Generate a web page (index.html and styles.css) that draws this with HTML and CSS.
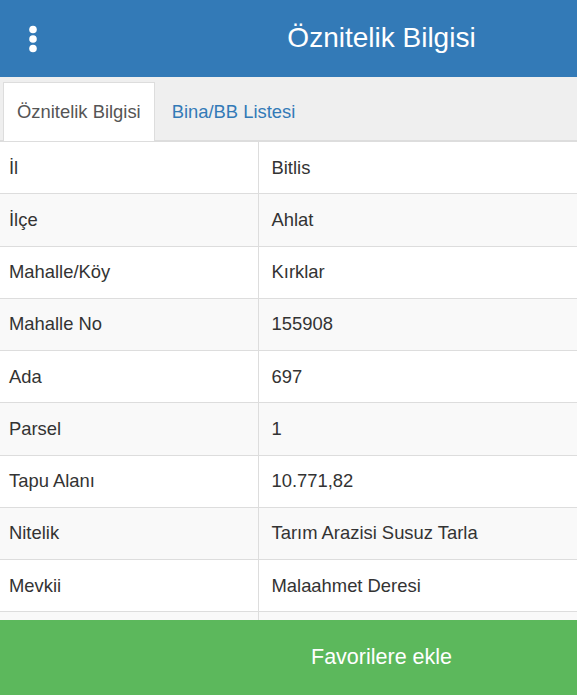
FILE: index.html
```html
<!DOCTYPE html>
<html lang="tr">
<head>
<meta charset="utf-8">
<title>Öznitelik Bilgisi</title>
<link rel="stylesheet" href="styles.css">
</head>
<body>
<div class="app">
  <header class="topbar">
    <button class="menu-btn" aria-label="Menü">
      <svg width="14" height="30" viewBox="0 0 14 30">
        <circle cx="7" cy="5.5" r="3.8" fill="#fff"/>
        <circle cx="7" cy="15" r="3.8" fill="#fff"/>
        <circle cx="7" cy="24.5" r="3.8" fill="#fff"/>
      </svg>
    </button>
    <h1 class="title">Öznitelik Bilgisi</h1>
  </header>
  <nav class="tabs">
    <a class="tab active">Öznitelik Bilgisi</a>
    <a class="tab">Bina/BB Listesi</a>
  </nav>
  <div class="content">
    <table class="attr-table">
      <tr><td class="key">İl</td><td class="val">Bitlis</td></tr>
      <tr><td class="key">İlçe</td><td class="val">Ahlat</td></tr>
      <tr><td class="key">Mahalle/Köy</td><td class="val">Kırklar</td></tr>
      <tr><td class="key">Mahalle No</td><td class="val">155908</td></tr>
      <tr><td class="key">Ada</td><td class="val">697</td></tr>
      <tr><td class="key">Parsel</td><td class="val">1</td></tr>
      <tr><td class="key">Tapu Alanı</td><td class="val">10.771,82</td></tr>
      <tr><td class="key">Nitelik</td><td class="val">Tarım Arazisi Susuz Tarla</td></tr>
      <tr><td class="key">Mevkii</td><td class="val">Malaahmet Deresi</td></tr>
      <tr><td class="key"></td><td class="val"></td></tr>
    </table>
  </div>
  <button class="fav-btn">Favorilere ekle</button>
</div>
</body>
</html>
```
FILE: styles.css
```css
* { box-sizing: border-box; }
html, body { margin: 0; padding: 0; }
body {
  font-family: "Liberation Sans", Arial, sans-serif;
  color: #333;
  background: #fff;
  width: 577px;
  height: 695px;
  overflow: hidden;
}
.app {
  display: flex;
  flex-direction: column;
  height: 695px;
}
.topbar {
  height: 77px;
  background: #337ab7;
  display: flex;
  align-items: center;
  flex-shrink: 0;
}
.menu-btn {
  background: none;
  border: 0;
  padding: 0;
  margin-left: 26px;
  margin-top: 1px;
  width: 14px;
  height: 30px;
  display: flex;
}
.title {
  margin: 0;
  flex: 1;
  padding-left: 146px;
  text-align: center;
  color: #fff;
  font-weight: normal;
  font-size: 28px;
  line-height: 32px;
  margin-top: -1px;
}
.tabs {
  background: #efefef;
  height: 64px;
  flex-shrink: 0;
  display: flex;
  align-items: flex-end;
  padding-left: 3px;
  border-bottom: 1px solid #ddd;
}
.tab {
  height: 59px;
  display: flex;
  align-items: center;
  padding: 0 13px;
  margin-right: 3px;
  font-size: 18.4px;
  color: #337ab7;
  border: 1px solid transparent;
  border-bottom: 0;
  margin-bottom: -1px;
}
.tab.active {
  background: #fff;
  color: #555;
  border-color: #ddd;
}
.content {
  flex: 1;
  overflow: hidden;
}
.attr-table {
  width: 100%;
  border-collapse: collapse;
  font-size: 18.4px;
}
.attr-table td {
  height: 52.25px;
  padding: 0 13px;
  border-top: 1px solid #ddd;
  line-height: 24px;
  vertical-align: middle;
}
.attr-table tr:nth-child(even) td { background: #f9f9f9; }
.attr-table .key {
  width: 258px;
  padding-left: 9px;
  border-right: 1px solid #ddd;
}
.fav-btn {
  height: 75px;
  flex-shrink: 0;
  border: 0;
  background: #5cb85c;
  color: #fff;
  font-family: "Liberation Sans", Arial, sans-serif;
  font-size: 21.5px;
  padding: 0 0 0 186px;
  text-align: center;
}
```
